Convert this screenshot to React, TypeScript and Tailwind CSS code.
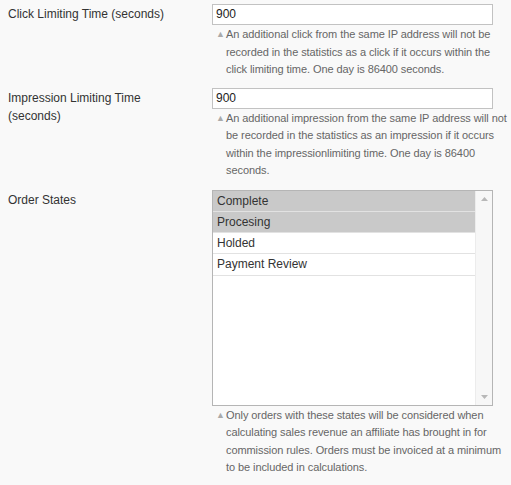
import React from "react"

const font = { fontFamily: '"Liberation Sans", Arial, sans-serif' }

function Note({ children }: { children: React.ReactNode }) {
  return (
    <div className="mr-[-17px] mt-[1px] flex text-[11px] leading-[17.5px] tracking-[-0.08px] text-[#666]">
      <span className="w-[14px] shrink-0 pl-[4px] text-[9px] text-[#aaa]">▲</span>
      <span>{children}</span>
    </div>
  )
}

function Row({ label, children }: { label: string; children: React.ReactNode }) {
  return (
    <div className="flex">
      <div className="w-[212px] shrink-0 pl-[8px] pr-[28px] pt-[1px] text-[12px] leading-[18px] text-[#333]">{label}</div>
      <div className="w-[281px]">{children}</div>
    </div>
  )
}

function TextField({ value }: { value: string }) {
  return (
    <div className="h-[21px] border border-[#c2c2c2] bg-white px-[3px] text-[12px] leading-[19px] text-[#222]">
      {value}
    </div>
  )
}

const states = [
  { name: "Complete", selected: true },
  { name: "Procesing", selected: true },
  { name: "Holded", selected: false },
  { name: "Payment Review", selected: false },
]

export default function App() {
  return (
    <div className="min-h-[485px] w-[511px] bg-[#f9f9f9] pt-[4px]" style={font}>
      <Row label="Click Limiting Time (seconds)">
        <TextField value="900" />
        <Note>
          An additional click from the same IP address will not be recorded in the statistics as a click if it occurs within the click limiting time. One day is 86400 seconds.
        </Note>
      </Row>
      <div className="h-[9px]" />
      <Row label="Impression Limiting Time (seconds)">
        <TextField value="900" />
        <Note>
          An additional impression from the same IP address will not be recorded in the statistics as an impression if it occurs within the impressionlimiting time. One day is 86400 seconds.
        </Note>
      </Row>
      <div className="h-[10px]" />
      <Row label="Order States">
        <div className="flex h-[216px] border border-[#b5b5b5] bg-white">
          <div className="flex-1">
            {states.map((s) => (
              <div
                key={s.name}
                className={`h-[21.3px] border-b border-[#e2e2e2] px-[4px] text-[12px] leading-[20px] text-[#333] ${
                  s.selected ? "bg-[#c9c9c9]" : "bg-white"
                }`}
              >
                {s.name}
              </div>
            ))}
          </div>
          <div className="flex w-[17px] flex-col items-center justify-between border-l border-[#ececec] bg-[#f7f7f7] py-[6px]">
            <svg width="7" height="4" viewBox="0 0 7 4">
              <path d="M3.5 0 L7 4 L0 4 Z" fill="#b8b8b8" />
            </svg>
            <svg width="7" height="4" viewBox="0 0 7 4">
              <path d="M0 0 L7 0 L3.5 4 Z" fill="#b8b8b8" />
            </svg>
          </div>
        </div>
        <Note>
          Only orders with these states will be considered when calculating sales revenue an affiliate has brought in for commission rules. Orders must be invoiced at a minimum to be included in calculations.
        </Note>
      </Row>
    </div>
  )
}
